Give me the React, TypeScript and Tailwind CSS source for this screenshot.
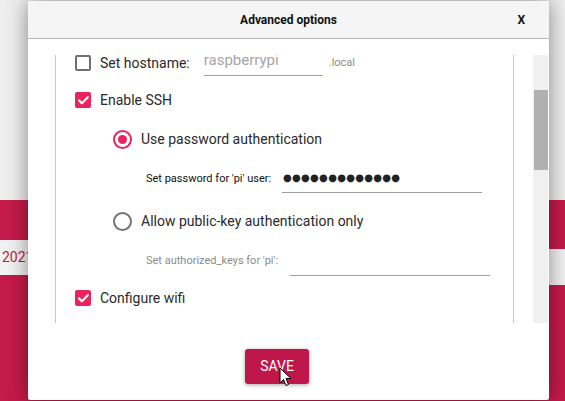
import { Check } from "lucide-react";

function CheckBox({ checked }: { checked: boolean }) {
  return checked ? (
    <div className="flex h-[16px] w-[16px] shrink-0 items-center justify-center rounded-[2px] bg-[#e8245e]">
      <Check className="h-[13px] w-[13px] text-white" strokeWidth={4} />
    </div>
  ) : (
    <div className="h-[16px] w-[16px] shrink-0 rounded-[2px] border-2 border-[#707070]" />
  );
}

function Radio({ checked }: { checked: boolean }) {
  return checked ? (
    <div className="flex h-[19px] w-[19px] shrink-0 items-center justify-center rounded-full border-2 border-[#e8245e]">
      <div className="h-[9px] w-[9px] rounded-full bg-[#e8245e]" />
    </div>
  ) : (
    <div className="h-[19px] w-[19px] shrink-0 rounded-full border-2 border-[#747474]" />
  );
}

export default function App() {
  return (
    <div className="relative h-[401px] w-[565px] overflow-hidden font-['Roboto',sans-serif] text-[#2a2a2a]">
      {/* page behind the dialog */}
      <div className="flex h-full flex-col">
        <div className="h-[200px] bg-[#efefef]" />
        <div className="flex flex-1 items-start justify-between bg-[#c51a4a]">
          <div className="mt-[40px] flex h-[35px] w-[60px] items-center bg-[#f3f3f3] pl-[2px] text-[14px] text-[#c51a4a]">
            2021
          </div>
          <div className="mt-[49px] h-[36px] w-[40px] bg-[#f3f3f3]" />
        </div>
      </div>

      {/* dialog */}
      <div className="absolute left-[28px] top-[1px] flex h-[399px] w-[521px] flex-col rounded-[2px] bg-white shadow-[0_0_22px_rgba(0,0,0,0.45)]">
        <div className="relative flex h-[38px] shrink-0 items-center justify-center border-b border-[#b8b8b8] bg-[#f5f5f5]">
          <span className="text-[12px] font-bold text-[#111]">Advanced options</span>
          <span className="absolute right-[24px] text-[12px] font-bold text-[#111]">X</span>
        </div>

        <div className="flex h-[284px] shrink-0 pt-[16px] pl-[27px] pr-[1px]">
          <div className="h-[268px] w-[459px] overflow-hidden border-x border-[#c8c8c8]">
            <div className="-mt-[4px] flex flex-col">
              <div className="flex h-[24px] items-center pl-[19px]">
                <CheckBox checked={false} />
                <span className="ml-[9px] whitespace-nowrap text-[14px]">Set hostname:</span>
                <div className="ml-[14px] -mt-[4px] flex h-[30px] w-[119px] items-center border-b border-[#a0a0a0] text-[15px] text-[#a6a6a6]">
                  raspberrypi
                </div>
                <span className="ml-[6px] text-[11px] text-[#8a8a8a]">.local</span>
              </div>

              <div className="mt-[13px] flex h-[24px] items-center pl-[19px]">
                <CheckBox checked />
                <span className="ml-[9px] text-[14px]">Enable SSH</span>
              </div>

              <div className="mt-[15px] flex h-[24px] items-center pl-[57px]">
                <Radio checked />
                <span className="ml-[9px] whitespace-nowrap text-[14px]">Use password authentication</span>
              </div>

              <div className="mt-[12px] flex h-[30px] items-center pl-[90px]">
                <span className="w-[136px] shrink-0 whitespace-nowrap pt-[3px] text-[11px] text-[#111]">Set password for 'pi' user:</span>
                <div className="flex h-[30px] w-[200px] shrink-0 items-center border-b border-[#a0a0a0] pl-[1px] font-['DejaVu_Sans',sans-serif] text-[10px] tracking-[0.3px] text-[#222]">
                  ●●●●●●●●●●●●●
                </div>
              </div>

              <div className="mt-[16px] flex h-[24px] items-center pl-[57px]">
                <Radio checked={false} />
                <span className="ml-[9px] whitespace-nowrap text-[14px]">Allow public-key authentication only</span>
              </div>

              <div className="mt-[14px] flex h-[29px] items-center pl-[90px]">
                <span className="w-[144px] shrink-0 whitespace-nowrap text-[11px] text-[#8c8c8c]">Set authorized_keys for 'pi':</span>
                <div className="h-[29px] w-[200px] shrink-0 border-b border-[#a0a0a0]" />
              </div>

              <div className="mt-[10px] flex h-[24px] items-center pl-[19px]">
                <CheckBox checked />
                <span className="ml-[9px] text-[14px]">Configure wifi</span>
              </div>
            </div>
          </div>
          <div className="ml-[19px] h-[268px] w-[15px] bg-[#f0f0f0] pt-[35px] pl-[1px]">
            <div className="h-[80px] w-full bg-[#b0b0b0]" />
          </div>
        </div>

        <div className="flex flex-1 justify-center pt-[26px] pr-[23px]">
          <button className="relative h-[35px] w-[64px] rounded-[3px] bg-[#c0174a] text-[14px] text-white shadow-[0_1px_4px_rgba(0,0,0,0.35)]">
            SAVE
            <svg
              className="absolute left-[34px] top-[18px]"
              width="13"
              height="20"
              viewBox="0 0 13 20"
            >
              <path
                d="M1 1 L1 16 L4.5 12.5 L7 18.5 L9.5 17.5 L7 11.5 L12 11.5 Z"
                fill="#fff"
                stroke="#000"
                strokeWidth="1"
                strokeLinejoin="round"
              />
            </svg>
          </button>
        </div>
      </div>
    </div>
  );
}
